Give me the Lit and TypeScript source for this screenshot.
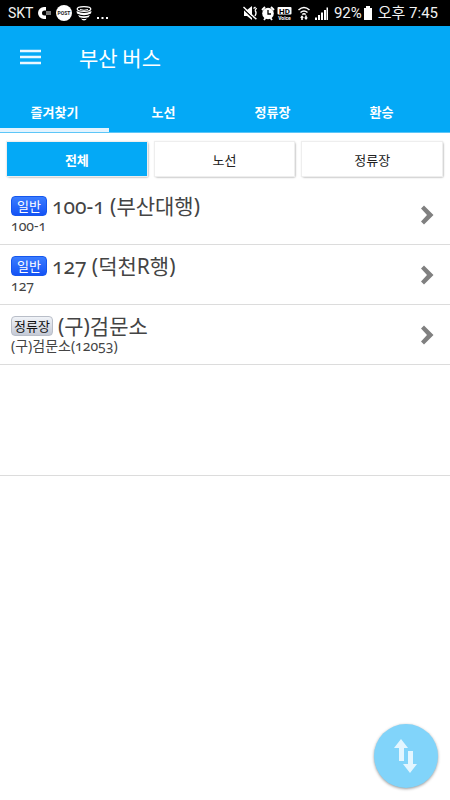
import { LitElement, html, css, svg } from "lit";
import { customElement, state } from "lit/decorators.js";
import { classMap } from "lit/directives/class-map.js";

interface Favorite {
  kind: "bus" | "stop";
  badge: string;
  title: string;
  detail: string;
}

const TABS = ["즐겨찾기", "노선", "정류장", "환승"];
const FILTERS = ["전체", "노선", "정류장"];
const FAVORITES: Favorite[] = [
  { kind: "bus", badge: "일반", title: "100-1 (부산대행)", detail: "100-1" },
  { kind: "bus", badge: "일반", title: "127 (덕천R행)", detail: "127" },
  { kind: "stop", badge: "정류장", title: "(구)검문소", detail: "(구)검문소(12053)" },
];

@customElement("status-bar")
class StatusBar extends LitElement {
  static styles = css`
    :host {
      display: flex;
      align-items: center;
      justify-content: space-between;
      height: 26px;
      padding: 0 12px 0 8px;
      background: #000;
      color: #f2f2f2;
      font: 15px/26px Roboto, "Noto Sans CJK KR", sans-serif;
    }
    .group {
      display: flex;
      align-items: center;
      white-space: nowrap;
    }
    .carrier { font-size: 14px; }
    .clock { margin-left: 4px; }
    .percent { margin-left: 4px; }
    svg { display: block; }
  `;

  render() {
    return html`
      <div class="group">
        <span class="carrier">SKT</span>
        <svg width="76" height="20" viewBox="33 3 76 20" aria-hidden="true">
          ${svg`
          <path d="M46 7H44A6 6 0 0 0 44 19H46V15.500H44.500A2.500 2.500 0 0 1 44.500 10.500H46Z" fill="#fff"/>
          <rect x="46" y="11" width="5" height="4" fill="#777"/>
          <circle cx="64" cy="13" r="8" fill="#fff"/>
          <text x="64" y="15" text-anchor="middle" font-family="Roboto" font-size="5" font-weight="700" fill="#222">POST</text>
          <ellipse cx="84" cy="9" rx="6.800" ry="2.400" fill="none" stroke="#fff" stroke-width="1.300"/>
          <path d="M80 9.500q4 1.500 8 0" fill="none" stroke="#fff" stroke-width="1"/>
          <path d="M76.500 11Q84 15 91.500 11L91 13.500Q84 17 77 13.500ZM78 15Q84 17.500 90 15L88.500 17.200Q84 18.800 79.500 17.200ZM81 18.500Q84 19.500 87 18.500Q86 20.500 84 20.500Q82 20.500 81 18.500Z" fill="#fff"/>
          <path d="M97 17h2v2h-2zM101.500 17h2v2h-2zM106 17h2v2h-2z" fill="#fff"/>
          `}
        </svg>
      </div>
      <div class="group">
        <svg width="88" height="20" viewBox="243 3 88 20" aria-hidden="true">
          ${svg`
          <path d="M245 10h3l5-4v14l-5-4h-3z" fill="#fff"/>
          <path d="M244 8.500L256 20" stroke="#000" stroke-width="1.200"/>
          <path d="M244.500 7L257 19M254.500 8.500l2-1.500M256 10.500q2 2 0 5.500M257.500 8l-1.500 2.500M254.500 17l3 2" stroke="#fff" stroke-width="1.400" fill="none"/>
          <circle cx="269" cy="13.500" r="5.800" fill="#fff"/>
          <path d="M263 10l3-3M275 10l-3-3M265 20l1.500-2M273 20l-1.500-2" stroke="#fff" stroke-width="1.800"/>
          <path d="M269 10v4h3" stroke="#000" stroke-width="1.300" fill="none"/>
          <rect x="278.500" y="7" width="14" height="7.500" rx="1" fill="#fff"/>
          <text x="285.500" y="13.500" text-anchor="middle" font-family="Roboto" font-size="8" font-weight="700" fill="#000">HD</text>
          <text x="285.500" y="20" text-anchor="middle" font-family="Roboto" font-size="5" font-weight="700" fill="#fff">Voice</text>
          <path d="M299.500 10q5.500-5 11 0M301.500 12.500q3.500-3 7 0M303.300 14.500q1.700-1.500 3.400 0" stroke="#fff" stroke-width="1.500" fill="none"/>
          <path d="M301 17.800l2-2.500 2 2.500h-1.200V20h-1.600v-2.200zM305 17.500h1.200V15.500h1.600v2h1.200l-2 2.500z" fill="#fff"/>
          <path d="M316 17.500h2V20h-2zM319 15h2v5h-2zM322 12.500h2V20h-2zM325 10h2v10h-2zM327.500 7.500h1.500V20h-1.500z" fill="#fff"/>
          `}
        </svg>
        <span class="percent">92%</span>
        <svg width="12" height="16" viewBox="2 0 12 16" aria-hidden="true">
          <path d="M4 3h2V1h4v2h2v12H4z" fill="#fff" />
        </svg>
        <span class="clock">오후 7:45</span>
      </div>
    `;
  }
}

@customElement("favorite-row")
class FavoriteRow extends LitElement {
  static properties = { item: { attribute: false } };
  declare item: Favorite;

  static styles = css`
    :host { display: block; }
    .row {
      display: flex;
      align-items: center;
      justify-content: space-between;
      box-sizing: border-box;
      width: 100%;
      height: 59px;
      padding: 0 16px 0 11px;
      border: 0;
      background: none;
      color: #444;
      text-align: left;
      font-family: "Noto Sans", "Noto Sans CJK KR", sans-serif;
      font-variant-numeric: oldstyle-nums;
      cursor: pointer;
    }
    .text { display: flex; flex-direction: column; padding-bottom: 2px; }
    .heading { display: flex; align-items: center; gap: 5px; height: 24px; }
    .title { font-size: 21px; line-height: 24px; white-space: nowrap; }
    .detail { font-size: 14px; line-height: 16px; }
    .badge {
      box-sizing: border-box;
      height: 20px;
      padding: 0 5px;
      border: 1px solid #1557ee;
      border-radius: 4px;
      background: linear-gradient(#3b7dff, #1553f5);
      color: #fff;
      font-size: 13px;
      line-height: 18px;
      font-weight: 400;
    }
    .stop {
      padding: 0 2px;
      border-color: #b9bec8;
      background: linear-gradient(#f0f3f8, #c5cad6);
      color: #111;
    }
    .chevron { display: block; }
  `;

  render() {
    return html`
      <button class="row">
        <span class="text">
          <span class="heading">
            <span class=${classMap({ badge: true, stop: this.item.kind === "stop" })}>${this.item.badge}</span>
            <span class="title">${this.item.title}</span>
          </span>
          <span class="detail">${this.item.detail}</span>
        </span>
        <svg class="chevron" width="14" height="20" viewBox="0 0 14 20" aria-hidden="true">
          <path d="M1 3.500L4 0.500L13.500 10L4 19.500L1 16.500L7 10Z" fill="#808080" />
        </svg>
      </button>
    `;
  }
}

@customElement("app-root")
class AppRoot extends LitElement {
  @state() tab = 0;
  @state() filter = 0;

  static styles = css`
    :host {
      display: block;
      min-height: 100vh;
      background: #fff;
      font-family: "Noto Sans CJK KR", sans-serif;
    }
    button { font-family: inherit; cursor: pointer; }
    .header { background: #04a9f6; color: #fff; border-bottom: 1px solid #5cc6f8; }
    .bar { display: flex; align-items: center; gap: 37px; height: 62px; padding-left: 20px; }
    .menu { padding: 0; border: 0; background: none; }
    .menu svg { display: block; }
    .name { margin: 0; font-size: 21px; line-height: 30px; font-weight: 400; }
    .tabs { display: flex; padding-right: 14px; }
    .tab {
      flex: 1;
      height: 44px;
      padding: 6px 0 0;
      border: 0;
      border-bottom: 4px solid transparent;
      background: none;
      color: #fff;
      font-size: 13px;
      font-weight: 700;
    }
    .tab.active { border-bottom-color: #e3f3fe; }
    .filters { display: flex; gap: 8px; padding: 9px 8px 9px 7px; }
    .filter {
      flex: 1;
      height: 34px;
      padding: 0;
      border: 0;
      background: #fff;
      color: #222;
      font-size: 13px;
      font-weight: 400;
      box-shadow: 0 0 1px 1px #eee, 1px 1px 2px #777;
    }
    .filter.active { background: #04a9f6; color: #fff; font-weight: 700; }
    .list { margin: 0; padding: 0; list-style: none; }
    .list li { border-bottom: 1px solid #dcdcdc; }
    .blank { height: 110px; border-bottom: 1px solid #dcdcdc; }
    .sort {
      position: fixed;
      right: 12px;
      bottom: 12px;
      width: 64px;
      height: 64px;
      padding: 0;
      border: 0;
      border-radius: 50%;
      background: #81d4fa;
      box-shadow: 0 1px 3px #999;
    }
    .sort svg { display: block; margin: 0 auto; }
  `;

  render() {
    return html`
      <status-bar></status-bar>
      <header class="header">
        <div class="bar">
          <button class="menu" aria-label="메뉴">
            <svg width="22" height="16" viewBox="0 0 22 16">
              <path d="M0 2h21M0 8h21M0 14h21" stroke="#e9f7ff" stroke-width="2.400" />
            </svg>
          </button>
          <h1 class="name">부산 버스</h1>
        </div>
        <nav class="tabs">
          ${TABS.map(
            (label, i) => html`<button
              class=${classMap({ tab: true, active: i === this.tab })}
              @click=${() => (this.tab = i)}
            >${label}</button>`
          )}
        </nav>
      </header>
      <main>
        <div class="filters">
          ${FILTERS.map(
            (label, i) => html`<button
              class=${classMap({ filter: true, active: i === this.filter })}
              @click=${() => (this.filter = i)}
            >${label}</button>`
          )}
        </div>
        <ul class="list">
          ${FAVORITES.map((item) => html`<li><favorite-row .item=${item}></favorite-row></li>`)}
        </ul>
        <div class="blank"></div>
      </main>
      <button class="sort" aria-label="순서 변경">
        <svg width="26" height="36" viewBox="0 0 26 36">
          <path d="M8 1l7 9h-4v13H6V10H1zM15 13h5v13h4l-7 9-7-9h5z" fill="#e3f6ff" />
        </svg>
      </button>
    `;
  }
}
